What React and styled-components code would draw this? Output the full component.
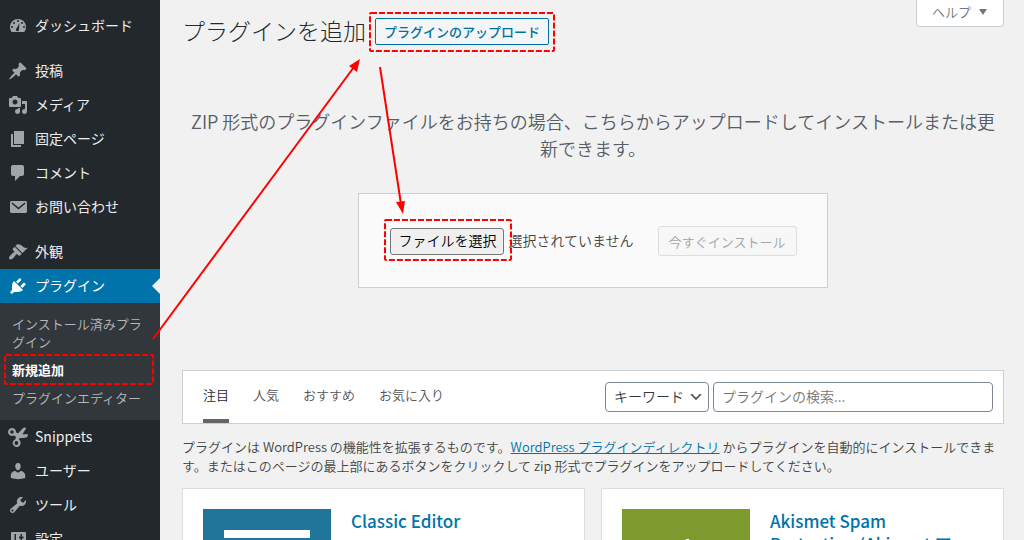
import React, { useState } from "react";
import styled, { createGlobalStyle, css } from "styled-components";

const GlobalStyle = createGlobalStyle`
  * {
    box-sizing: border-box;
  }

  body {
    margin: 0;
    background: #f1f1f1;
    color: #444;
    font-family: "Noto Sans CJK JP", "Noto Sans", sans-serif;
    font-size: 13px;
    font-weight: 350;
    line-height: 19px;
  }

  button,
  input,
  select {
    font-family: inherit;
    font-weight: inherit;
  }
`;

const Page = styled.div`
  position: relative;
  display: flex;
  height: 100vh;
  overflow: hidden;
`;

const Sidebar = styled.nav`
  flex: 0 0 160px;
  padding-top: 9px;
  background: #23282d;
`;

const MenuList = styled.ul`
  list-style: none;
  margin: 0;
  padding: 0;
`;

const MenuItem = styled.li`
  margin-top: ${({ $separated }) => ($separated ? "11px" : "0")};
`;

const MenuLabel = styled.span`
  padding-bottom: 2px;
`;

const MenuLink = styled.a`
  position: relative;
  display: flex;
  align-items: center;
  gap: 7px;
  height: 34px;
  padding-left: 8px;
  color: #eee;
  font-size: 14px;
  font-weight: 400;
  line-height: 18px;
  text-decoration: none;
  white-space: nowrap;

  svg {
    flex: none;
    fill: #a0a5aa;
  }

  ${({ $current }) =>
    $current &&
    css`
      background: #0073aa;
      color: #fff;

      svg {
        fill: #fff;
      }

      &::after {
        content: "";
        position: absolute;
        top: 9px;
        right: 0;
        border: 8px solid transparent;
        border-left: 0;
        border-right-color: #f1f1f1;
      }
    `}
`;

const Submenu = styled.ul`
  list-style: none;
  margin: 0;
  padding: 7px 0 8px;
  background: #32373c;
`;

const SubmenuLink = styled.a`
  display: block;
  padding: 5px 12px;
  color: ${({ $current }) => ($current ? "#fff" : "#b4b9be")};
  font-weight: ${({ $current }) => ($current ? 700 : 350)};
  line-height: 18px;
  text-decoration: none;
`;

const Main = styled.main`
  flex: 1;
  min-width: 0;
  padding: 0 20px 0 22px;
`;

const TopRow = styled.header`
  display: flex;
  align-items: flex-start;
  justify-content: space-between;
`;

const Heading = styled.div`
  display: flex;
  align-items: center;
  gap: 9px;
  padding-top: 14px;
`;

const Title = styled.h1`
  margin: 0;
  padding-bottom: 2px;
  color: #23282d;
  font-size: 23px;
  font-weight: 300;
  line-height: 32px;
`;

const UploadButton = styled.button`
  height: 27px;
  padding: 0 8px;
  border: 1px solid #0071a1;
  border-radius: 2px;
  background: #f3f5f6;
  color: #0071a1;
  font-size: 13px;
  font-weight: 500;
  line-height: 25px;
`;

const HelpButton = styled.button`
  display: flex;
  align-items: center;
  gap: 8px;
  height: 27px;
  padding: 0 16px 3px 15px;
  border: 1px solid #ccd0d4;
  border-top: 0;
  border-radius: 0 0 4px 4px;
  background: #fff;
  color: #72777c;
  font-size: 13px;
`;

const UploadHelp = styled.p`
  margin: 60px 0 31px;
  padding: 0 8px;
  color: #555d66;
  font-size: 18px;
  line-height: 27px;
  text-align: center;
`;

const UploadForm = styled.form`
  display: flex;
  align-items: center;
  width: fit-content;
  margin: 0 auto;
  padding: 32px 30px 31px 31px;
  border: 1px solid #ccd0d4;
  background: #fafafa;
`;

const FileLabel = styled.label`
  display: flex;
  align-items: center;
  gap: 4px;
  margin-right: 24px;
  font-size: 14px;
`;

const FileInput = styled.input`
  position: absolute;
  width: 1px;
  height: 1px;
  opacity: 0;
`;

const FileButton = styled.span`
  padding: 0 7px 2px;
  border: 1px solid #767676;
  border-radius: 3px;
  background: #efefef;
  color: #000;
  line-height: 23px;
`;

const FileStatus = styled.span`
  padding-bottom: 2px;
`;

const InstallButton = styled.button`
  min-width: 139px;
  height: 30px;
  padding: 0 10px;
  border: 1px solid #ddd;
  border-radius: 3px;
  background: #f7f7f7;
  color: #a0a5aa;
  font-size: 13px;
`;

const FilterBar = styled.div`
  display: flex;
  justify-content: space-between;
  align-items: center;
  height: 54px;
  margin-top: 82px;
  padding: 0 10px 0 20px;
  border: 1px solid #ccd0d4;
  background: #fff;
`;

const FilterLinks = styled.div`
  display: flex;
  gap: 24px;
`;

const FilterLink = styled.a`
  height: 52px;
  border-bottom: 4px solid ${({ $current }) => ($current ? "#666" : "transparent")};
  color: ${({ $current }) => ($current ? "#23282d" : "#555")};
  line-height: 47px;
  text-decoration: none;
`;

const SearchForm = styled.form`
  display: flex;
  gap: 4px;
`;

const SelectWrap = styled.div`
  position: relative;

  svg {
    position: absolute;
    top: 7px;
    right: 5px;
    pointer-events: none;
  }
`;

const fieldStyles = css`
  height: 30px;
  margin: 0;
  padding: 0 8px 2px;
  border: 1px solid #7e8993;
  border-radius: 4px;
  background: #fff;
  color: #32373c;
  font-size: 14px;
`;

const Select = styled.select`
  ${fieldStyles}
  width: 104px;
  appearance: none;
`;

const SearchInput = styled.input`
  ${fieldStyles}
  width: 280px;

  &::placeholder {
    color: #757575;
  }
`;

const Intro = styled.p`
  margin: 13px 0;

  a {
    color: #0073aa;
  }
`;

const CardGrid = styled.div`
  display: grid;
  grid-template-columns: 1fr 1fr;
  gap: 16px;
`;

const Card = styled.article`
  display: flex;
  gap: 20px;
  min-height: 220px;
  padding: 20px;
  border: 1px solid #ddd;
  background: #fff;
`;

const CardTitle = styled.h3`
  max-width: 190px;
  margin: 0;
  font-size: 17px;
  font-weight: 500;
  line-height: 23px;

  a {
    color: #0073aa;
    text-decoration: none;
  }
`;

const Annotations = styled.svg`
  position: absolute;
  top: 0;
  left: 0;
  pointer-events: none;
`;

const icons = {
  dashboard:
    "M3.76 16h12.48A8 8 0 0 0 18 11a8 8 0 0 0-16 0c0 1.9.66 3.64 1.76 5zM10 4a1 1 0 1 1 0 2 1 1 0 0 1 0-2zM6 6a1 1 0 1 1 0 2 1 1 0 0 1 0-2zm8 0a1 1 0 1 1 0 2 1 1 0 0 1 0-2zm-2.6.9L11 13a1.6 1.6 0 1 1-2.1-.9zM4 10a1 1 0 1 1 0 2 1 1 0 0 1 0-2zm12 0a1 1 0 1 1 0 2 1 1 0 0 1 0-2z",
  post: "M10.44 3.02l1.82-1.82 6.36 6.35-1.83 1.82c-1.05-.68-2.48-.57-3.41.36l-.75.75c-.92.93-1.04 2.35-.35 3.41l-1.83 1.82-2.41-2.41-2.8 2.79c-.42.42-3.38 2.71-3.8 2.29s1.86-3.39 2.28-3.81l2.79-2.79L4.1 9.36l1.83-1.82c1.05.69 2.48.57 3.4-.36l.75-.75c.93-.92 1.05-2.35.36-3.41z",
  media:
    "M13 11V4c0-.55-.45-1-1-1h-1.67L9 1H5L3.67 3H2c-.55 0-1 .45-1 1v7c0 .55.45 1 1 1h10c.55 0 1-.45 1-1zM7 4.5c1.38 0 2.5 1.12 2.5 2.5S8.38 9.5 7 9.5 4.5 8.38 4.5 7 5.62 4.5 7 4.5zM14 6h5v10.5c0 1.38-1.12 2.5-2.5 2.5S14 17.88 14 16.5s1.12-2.5 2.5-2.5c.17 0 .34.02.5.05V9h-3V6zm-4 8.05V13h2v3.5c0 1.38-1.12 2.5-2.5 2.5S7 17.88 7 16.5 8.12 14 9.5 14c.17 0 .34.02.5.05z",
  page: "M6 15V2h10v13H6zm-1 1h8v2H3V5h2v11z",
  comments:
    "M5 2h9c1.1 0 2 .9 2 2v7c0 1.1-.9 2-2 2h-2l-5 5v-5H5c-1.1 0-2-.9-2-2V4c0-1.1.9-2 2-2z",
  email:
    "M3.5 4h14c.83 0 1.5.67 1.5 1.5v9c0 .83-.67 1.5-1.5 1.5h-14c-.83 0-1.5-.67-1.5-1.5v-9C2 4.67 2.67 4 3.5 4zm.8 1.4-.9 1.1 7.1 6.1 7.1-6.1-.9-1.1-6.2 5z",
  appearance:
    "M14.48 11.06L7.41 3.99l1.5-1.5c.5-.56 2.3-.47 3.51.32 1.21.8 1.43 1.28 2.91 2.1 1.18.64 2.45 1.26 4.45.85zm-.71.71L6.7 4.7 4.93 6.47c-.39.39-.39 1.02 0 1.41l1.06 1.06c.39.39.39 1.03 0 1.42-.6.6-1.43 1.11-2.21 1.69-.35.26-.7.53-1.01.84C1.43 14.23.4 16.08 1.4 17.07c.99 1 2.84-.03 4.18-1.36.31-.31.58-.66.85-1.02.57-.78 1.08-1.61 1.69-2.21.39-.39 1.02-.39 1.41 0l1.06 1.06c.39.39 1.02.39 1.41 0z",
  plugins:
    "M13.11 4.36L9.87 7.6 8 5.73l3.24-3.24c.35-.34 1.05-.2 1.56.32.52.51.66 1.21.31 1.55zm-8 1.77l.91-1.12 9.01 9.01-1.19.84c-.71.71-2.63 1.16-3.82 1.16H6.14L4.9 17.26c-.59.59-1.54.59-2.12 0-.59-.58-.59-1.53 0-2.12l1.24-1.24v-3.88c0-1.13.4-3.19 1.09-3.89zm7.26 3.97l3.24-3.24c.34-.35 1.04-.21 1.55.31.52.51.66 1.21.31 1.55l-3.24 3.25z",
  snippets:
    "M4 1a4 4 0 0 1 4 4.3l2 1.2 4.6-4.9c1.4-1.2 3.2-1.3 3.6-.4l-3.8 6H20c.2 2-1.2 3.4-3 3.6l-5.6.4-.6 1.4a4 4 0 1 1-3.4-.4l.6-2.4-2.2-1.2A4 4 0 1 1 4 1zm0 2.2a1.8 1.8 0 1 0 0 3.6 1.8 1.8 0 0 0 0-3.6zm4.4 10.9a1.9 1.9 0 1 0 0 3.8 1.900 1.900 0 0 0 0-3.800z",
  users:
    "M10 9.25c-2.27 0-2.73-3.44-2.73-3.44C7 4.02 7.82 2 9.97 2c2.16 0 2.98 2.02 2.71 3.81 0 0-.41 3.44-2.68 3.44zm0 2.57L12.72 10c2.39 0 4.52 2.33 4.52 4.53v2.49s-3.65 1.13-7.24 1.13c-3.65 0-7.24-1.13-7.24-1.13v-2.49c0-2.25 1.94-4.48 4.47-4.48z",
  tools:
    "M16.68 9.77c-1.34 1.34-3.3 1.67-4.95.99l-5.41 6.52c-.99.99-2.59.99-3.58 0s-.99-2.59 0-3.57l6.52-5.42c-.68-1.65-.35-3.61.99-4.95 1.28-1.28 3.12-1.62 4.72-1.06l-2.89 2.89 2.82 2.82 2.86-2.87c.53 1.58.18 3.39-1.08 4.65zM3.81 16.21c.4.39 1.04.39 1.43 0 .4-.4.4-1.04 0-1.43-.39-.4-1.03-.4-1.43 0-.39.39-.39 1.03 0 1.43z",
  settings:
    "M4 3h13c.55 0 1 .45 1 1v13c0 .55-.45 1-1 1H4c-.55 0-1-.45-1-1V4c0-.55.45-1 1-1zm2.500 2v6H5v2h1.500v3H8V5zm6 0v2.500H11v2h1.500V16H14V9.500h1.500v-2H14V5z",
};

const menu = [
  { icon: "dashboard", label: "ダッシュボード" },
  { icon: "post", label: "投稿", separated: true },
  { icon: "media", label: "メディア" },
  { icon: "page", label: "固定ページ" },
  { icon: "comments", label: "コメント" },
  { icon: "email", label: "お問い合わせ" },
  { icon: "appearance", label: "外観", separated: true },
  {
    icon: "plugins",
    label: "プラグイン",
    current: true,
    children: ["インストール済みプラグイン", "新規追加", "プラグインエディター"],
  },
  { icon: "snippets", label: "Snippets" },
  { icon: "users", label: "ユーザー" },
  { icon: "tools", label: "ツール" },
  { icon: "settings", label: "設定" },
];

const filters = ["注目", "人気", "おすすめ", "お気に入り"];

const MenuIcon = ({ name }) => (
  <svg width="20" height="20" viewBox="0 0 20 20" aria-hidden="true">
    <path fillRule="evenodd" d={icons[name]} />
  </svg>
);

const ClassicEditorLogo = () => (
  <svg width="128" height="128" viewBox="0 0 128 128" aria-hidden="true">
    <rect width="128" height="128" fill="#21759b" />
    <path fill="#fff" d="M21 21h86v8H21zM21 42h86v8H21zM21 63h86v44H21z" />
  </svg>
);

const AkismetLogo = () => (
  <svg width="128" height="128" viewBox="0 0 128 128" aria-hidden="true">
    <rect width="128" height="128" fill="#7c9a2d" />
    <path fill="#fff" d="M64 30h3l28 69H80l-6-16H54l-6 16H33zM64 52l-7 20h14z" />
  </svg>
);

const AdminMenu = () => (
  <Sidebar>
    <MenuList>
      {menu.map((item) => (
        <MenuItem key={item.label} $separated={item.separated}>
          <MenuLink href="#" $current={item.current}>
            <MenuIcon name={item.icon} />
            <MenuLabel>{item.label}</MenuLabel>
          </MenuLink>
          {item.children && (
            <Submenu>
              {item.children.map((label) => (
                <li key={label}>
                  <SubmenuLink href="#" $current={label === "新規追加"}>
                    {label}
                  </SubmenuLink>
                </li>
              ))}
            </Submenu>
          )}
        </MenuItem>
      ))}
    </MenuList>
  </Sidebar>
);

const App = () => {
  const [filter, setFilter] = useState("注目");
  const [fileName, setFileName] = useState("");
  const [keyword, setKeyword] = useState("");

  return (
    <Page>
      <GlobalStyle />
      <AdminMenu />
      <Main>
        <TopRow>
          <Heading>
            <Title>プラグインを追加</Title>
            <UploadButton type="button">プラグインのアップロード</UploadButton>
          </Heading>
          <HelpButton type="button">
            ヘルプ
            <svg width="8" height="6" viewBox="0 0 8 6" aria-hidden="true">
              <path d="M0 0h8L4 6z" fill="#72777c" />
            </svg>
          </HelpButton>
        </TopRow>

        <UploadHelp>
          ZIP 形式のプラグインファイルをお持ちの場合、こちらからアップロードしてインストールまたは更新できます。
        </UploadHelp>
        <UploadForm onSubmit={(e) => e.preventDefault()}>
          <FileLabel>
            <FileInput
              type="file"
              accept=".zip"
              onChange={(e) => setFileName(e.target.files[0]?.name || "")}
            />
            <FileButton>ファイルを選択</FileButton>
            <FileStatus>{fileName || "選択されていません"}</FileStatus>
          </FileLabel>
          <InstallButton type="submit" disabled={!fileName}>
            今すぐインストール
          </InstallButton>
        </UploadForm>

        <FilterBar>
          <FilterLinks>
            {filters.map((label) => (
              <FilterLink
                key={label}
                href="#"
                $current={label === filter}
                onClick={() => setFilter(label)}
              >
                {label}
              </FilterLink>
            ))}
          </FilterLinks>
          <SearchForm onSubmit={(e) => e.preventDefault()}>
            <SelectWrap>
              <Select aria-label="検索方法">
                <option>キーワード</option>
                <option>作者</option>
                <option>タグ</option>
              </Select>
              <svg width="16" height="16" viewBox="0 0 20 20" aria-hidden="true">
                <path d="M5 6l5 5 5-5 2 1-7 7-7-7 2-1z" fill="#555" />
              </svg>
            </SelectWrap>
            <SearchInput
              type="search"
              aria-label="プラグインの検索"
              placeholder="プラグインの検索..."
              value={keyword}
              onChange={(e) => setKeyword(e.target.value)}
            />
          </SearchForm>
        </FilterBar>

        <Intro>
          プラグインは WordPress の機能性を拡張するものです。
          <a href="#">WordPress プラグインディレクトリ</a>{" "}
          からプラグインを自動的にインストールできます。またはこのページの最上部にあるボタンをクリックして
          zip 形式でプラグインをアップロードしてください。
        </Intro>

        <CardGrid>
          <Card>
            <ClassicEditorLogo />
            <CardTitle>
              <a href="#">Classic Editor</a>
            </CardTitle>
          </Card>
          <Card>
            <AkismetLogo />
            <CardTitle>
              <a href="#">Akismet Spam Protection (Akismet アンチスパム)</a>
            </CardTitle>
          </Card>
        </CardGrid>
      </Main>

      <Annotations width="1024" height="540" viewBox="0 0 1024 540" aria-hidden="true">
        <g fill="none" stroke="#f00" strokeWidth="2">
          <g strokeDasharray="6 2">
            <rect x="370" y="13" width="184" height="38" rx="1" />
            <rect x="385" y="220" width="126" height="40" rx="1" />
            <rect x="5" y="355" width="148" height="29" rx="1" />
          </g>
          <path d="M153 339L354 67M380 67L401 204" />
        </g>
        <path fill="#f00" d="M360 59l-3 13-8-6zM403 214l-7-12 9-1z" />
      </Annotations>
    </Page>
  );
};

export default App;
